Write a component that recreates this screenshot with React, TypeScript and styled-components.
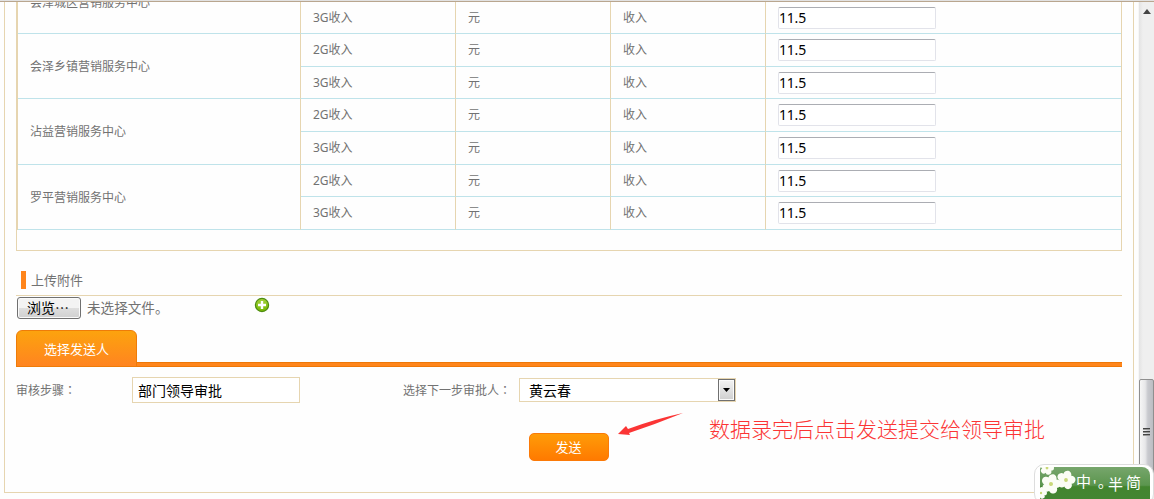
import React from 'react';
import styled, { createGlobalStyle } from 'styled-components';

const tan = '#e6d5b0';
const sky = '#bfe3ea';

const Global = createGlobalStyle`
  * { box-sizing: border-box; }
  body {
    margin: 0;
    overflow: hidden;
    background: #fefefe;
    color: #727272;
    font: 12px/16px "Noto Sans", "Noto Sans CJK SC", sans-serif;
  }
`;

const Screen = styled.div`
  position: relative;
  display: flex;
  width: 1154px;
  height: 499px;
  overflow: hidden;
  border-top: 1px solid #e2e2e2;
`;
const Viewport = styled.div`
  width: 1138px;
  height: 498px;
  padding-left: 4px;
  border-top: 1px solid #b9a68f;
`;
const Frame = styled.main`
  width: 1130px;
  height: 491px;
  padding: 0 11px;
  border: 1px solid ${tan};
  border-top: 0;
`;
const TableBox = styled.section`
  height: 249px;
  border: 1px solid ${tan};
  border-top: 0;
  border-right: 0;
`;
const Groups = styled.div`
  height: 228px;
  border-left: 1px solid ${tan};
`;
const BoxBody = styled.div`
  height: 248px;
  border-right: 1px solid ${tan};
`;
const Group = styled.div<{ $height: number }>`
  display: flex;
  height: ${(p) => p.$height}px;
`;
const GroupName = styled.div<{ $clipped?: boolean }>`
  display: flex;
  align-items: ${(p) => (p.$clipped ? 'flex-start' : 'center')};
  width: 283px;
  padding: 1px 0 0 12px;
  border-right: 1px solid ${tan};
  border-bottom: 1px solid ${sky};
  overflow: hidden;
  span {
    display: block;
    margin-top: ${(p) => (p.$clipped ? -8 : 0)}px;
  }
`;
const Lines = styled.div`
  flex: 1;
`;
const Line = styled.div<{ $height: number }>`
  display: grid;
  grid-template-columns: 155px 155px 155px 1fr;
  height: ${(p) => p.$height}px;
`;
const Cell = styled.div<{ $last?: boolean }>`
  display: flex;
  align-items: center;
  padding-left: 12px;
  border-right: ${(p) => (p.$last ? '0' : `1px solid ${tan}`)};
  border-bottom: 1px solid ${sky};
`;
const Amount = styled.input`
  display: block;
  width: 158px;
  height: 22px;
  padding: 0 0 1px;
  border: 1px solid #e2e3ea;
  border-top-color: #abadb3;
  border-radius: 2px;
  outline: 0;
  background: #fff;
  color: #000;
  font: 14px "Noto Sans", sans-serif;
  letter-spacing: -0.2px;
`;
const SectionTitle = styled.h2`
  display: flex;
  align-items: center;
  gap: 5px;
  height: 45px;
  margin: 0;
  padding: 14px 0 0 5px;
  border-bottom: 1px solid ${tan};
  font-size: 13px;
  font-weight: 400;
  &::before {
    content: '';
    width: 5px;
    height: 18px;
    background: #ff851b;
  }
`;
const UploadRow = styled.div`
  display: flex;
  align-items: flex-start;
  height: 34px;
  padding: 1px 0 0 1px;
  font-size: 13.6px;
`;
const Browse = styled.button`
  width: 64px;
  height: 22px;
  padding: 0 2px 2px 0;
  border: 1px solid #707070;
  border-radius: 3px;
  background: linear-gradient(#f3f3f3 0 48%, #dedede 52%, #d0d0d0);
  box-shadow: inset 0 0 0 1px #fafafa;
  color: #000;
  font: 14px/17px "Noto Sans CJK SC", sans-serif;
`;
const FileHint = styled.span`
  width: 173px;
  padding: 3px 0 0 6px;
`;
const Tabs = styled.div`
  display: flex;
  height: 37px;
  background: linear-gradient(#ee7808 0 1px, #ff851b 1px 4px, #ee7808 4px) bottom / 100% 5px no-repeat;
`;
const Tab = styled.div`
  width: 121px;
  height: 37px;
  border: 1px solid #ee7c08;
  border-radius: 6px 6px 0 0;
  background: linear-gradient(#fca30e, #ff8420);
  color: #fff;
  font-size: 13px;
  line-height: 36px;
  text-align: center;
`;
const FormRow = styled.div`
  display: flex;
  align-items: flex-start;
  height: 66px;
  padding-top: 10px;
`;
const Label = styled.label<{ $width: number }>`
  width: ${(p) => p.$width}px;
  padding-top: 5px;
`;
const Colon = styled.span`
  font-family: "Noto Sans CJK TC", sans-serif;
`;
const StepField = styled.input`
  width: 168px;
  height: 26px;
  margin-right: 103px;
  padding: 0 5px;
  border: 1px solid ${tan};
  outline: 0;
  background: #fff;
  color: #000;
  font: 14px "Noto Sans CJK SC", sans-serif;
`;
const Approver = styled.div`
  display: flex;
  justify-content: space-between;
  width: 217px;
  height: 24px;
  margin-top: 1px;
  padding-left: 9px;
  border: 1px solid ${tan};
  background: #fff;
  color: #000;
  font: 14px/23px "Noto Sans CJK SC", sans-serif;
`;
const DropButton = styled.span`
  display: flex;
  align-items: center;
  justify-content: center;
  width: 17px;
  height: 22px;
  border: 1px solid #707070;
  background: linear-gradient(#f3f3f3, #cfcfcf);
  box-shadow: inset 0 0 0 1px #fafafa;
`;
const Actions = styled.div`
  display: flex;
  align-items: flex-start;
  padding-left: 513px;
`;
const Send = styled.button`
  width: 80px;
  height: 28px;
  padding: 0 1px 1px 0;
  border: 1px solid #fb7a08;
  border-radius: 5px;
  background: linear-gradient(#ff9c08, #ff7a00);
  color: #fff;
  font: 13px/25px "Noto Sans CJK SC", sans-serif;
`;
const Arrow = styled.svg`
  width: 68px;
  height: 26px;
  margin: -21px 0 0 8px;
`;
const Note = styled.span`
  margin: -19px 0 0 24px;
  color: #fb3535;
  font: 300 21px/28px "Noto Sans CJK SC", sans-serif;
  white-space: nowrap;
`;
const ScrollTrack = styled.aside`
  display: flex;
  flex-direction: column;
  align-items: center;
  width: 16px;
  height: 498px;
  border-top: 1px solid #b9a68f;
  background: linear-gradient(90deg, #f7f7f7 0 1px, #e3e3e3 1px, #efefef 5px);
`;
const UpArrow = styled.svg`
  width: 8px;
  height: 5px;
  margin: 7px 0 363px 1px;
`;
const Thumb = styled.div`
  display: flex;
  flex-direction: column;
  align-items: center;
  justify-content: center;
  gap: 1px;
  flex: none;
  width: 15px;
  height: 106px;
  margin: 2px 0 0 1px;
  border: 1px solid #8f8f8f;
  border-radius: 2px;
  background: linear-gradient(90deg, #f6f6f6, #e7e7e9 40%, #c9cacf 60%, #bcbdc2);
`;
const Grip = styled.i`
  width: 7px;
  height: 2px;
  border-top: 1px solid #444;
  background: #999;
`;
const ImeBar = styled.div`
  position: absolute;
  left: 1034px;
  top: 463px;
  width: 120px;
  height: 40px;
  padding: 2px 4px 0 5px;
  border: 1px solid #ddd;
  border-radius: 10px;
  background: #fff;
`;
const ImeSkin = styled.div`
  display: flex;
  width: 110px;
  height: 38px;
  overflow: hidden;
  border-radius: 2px 8px 0 0;
  background: linear-gradient(#77a66c, #5b954e 48%, #43852f 52%, #438634);
`;
const ImeKeys = styled.div`
  display: flex;
  align-items: flex-start;
  color: #fff;
  font: 15px/29px "Noto Sans", "Noto Sans CJK SC", sans-serif;
`;
const ImeKey = styled.span<{ $width: number; $drop?: number }>`
  width: ${(p) => p.$width}px;
  padding-top: ${(p) => p.$drop ?? 0}px;
  white-space: nowrap;
`;

const Flower = ({ x, y, r }: { x: number; y: number; r: number }) => (
  <g transform={`translate(${x} ${y})`}>
    {[0, 72, 144, 216, 288].map((a) => (
      <ellipse key={a} cy={-r * 0.55} rx={r * 0.42} ry={r * 0.45} fill="#fbfdf5" transform={`rotate(${a + 15})`} />
    ))}
    <circle r={r * 0.2} fill="#c9d878" />
  </g>
);

const entries = [
  { name: '会泽城区营销服务中心', lines: [{ kind: '3G收入', height: 32 }] },
  { name: '会泽乡镇营销服务中心', lines: [{ kind: '2G收入', height: 33 }, { kind: '3G收入', height: 32 }] },
  { name: '沾益营销服务中心', lines: [{ kind: '2G收入', height: 33 }, { kind: '3G收入', height: 33 }] },
  { name: '罗平营销服务中心', lines: [{ kind: '2G收入', height: 32 }, { kind: '3G收入', height: 33 }] },
];

export default function App() {
  return (
    <>
      <Global />
      <Screen>
        <Viewport>
          <Frame>
            <TableBox>
              <BoxBody>
                <Groups>
                  {entries.map((group, g) => (
                    <Group key={group.name} $height={group.lines.reduce((sum, l) => sum + l.height, 0)}>
                      <GroupName $clipped={g === 0}><span>{group.name}</span></GroupName>
                      <Lines>
                        {group.lines.map((line) => (
                          <Line key={line.kind} $height={line.height}>
                            <Cell>{line.kind}</Cell>
                            <Cell>元</Cell>
                            <Cell>收入</Cell>
                            <Cell $last><Amount defaultValue="11.5" /></Cell>
                          </Line>
                        ))}
                      </Lines>
                    </Group>
                  ))}
                </Groups>
              </BoxBody>
            </TableBox>
            <SectionTitle>上传附件</SectionTitle>
            <UploadRow>
              <Browse>浏览⋯</Browse>
              <FileHint>未选择文件。</FileHint>
              <svg width="16" height="16" viewBox="0 0 16 16">
                <defs>
                  <linearGradient id="add" x2="0" y2="1">
                    <stop stopColor="#a4d23c" /><stop offset="1" stopColor="#74b800" />
                  </linearGradient>
                </defs>
                <circle cx="8" cy="8" r="6.6" fill="url(#add)" stroke="#4e8c12" strokeWidth="1.2" />
                <path d="M8 4v8M4 8h8" stroke="#fff" strokeWidth="2.4" />
              </svg>
            </UploadRow>
            <Tabs><Tab>选择发送人</Tab></Tabs>
            <FormRow>
              <Label $width={116}>审核步骤<Colon lang="zh-TW">：</Colon></Label>
              <StepField defaultValue="部门领导审批" />
              <Label $width={116}>选择下一步审批人<Colon lang="zh-TW">：</Colon></Label>
              <Approver>
                黄云春
                <DropButton>
                  <svg width="7" height="4"><path d="M0 0h7L3.5 4z" /></svg>
                </DropButton>
              </Approver>
            </FormRow>
            <Actions>
              <Send>发送</Send>
              <Arrow viewBox="0 0 68 26">
                <path d="M1 22L9 14 11 17Q38 7 66 1Q39 12 12 21L13 23Z" fill="#fb3535" />
              </Arrow>
              <Note>数据录完后点击发送提交给领导审批</Note>
            </Actions>
          </Frame>
        </Viewport>
        <ScrollTrack>
          <UpArrow viewBox="0 0 8 5"><path d="M4 0l4 5H0z" fill="#444" /></UpArrow>
          <Thumb><Grip /><Grip /><Grip /></Thumb>
        </ScrollTrack>
        <ImeBar>
          <ImeSkin>
            <svg width="36" height="34" viewBox="0 0 36 34">
              <path d="M2 34Q6 22 12 16M20 14L27 12" stroke="#2f5a22" fill="none" />
              <Flower x={11} y={17} r={10} />
              <Flower x={26} y={13} r={9.5} />
              <Flower x={7} y={1} r={7} />
              <Flower x={1} y={26} r={6} />
            </svg>
            <svg width="0" height="10" overflow="visible">
              <path d="M10 0h7q-1 5-3 7q-3-3-4-7z" fill="#9ccc3c" />
            </svg>
            <ImeKeys>
              <ImeKey $width={17}>中</ImeKey>
              <ImeKey $width={5} $drop={3}>'</ImeKey>
              <ImeKey $width={10}>｡</ImeKey>
              <ImeKey $width={18} $drop={3}>半</ImeKey>
              <ImeKey $width={18} $drop={1}>简</ImeKey>
            </ImeKeys>
          </ImeSkin>
        </ImeBar>
      </Screen>
    </>
  );
}
